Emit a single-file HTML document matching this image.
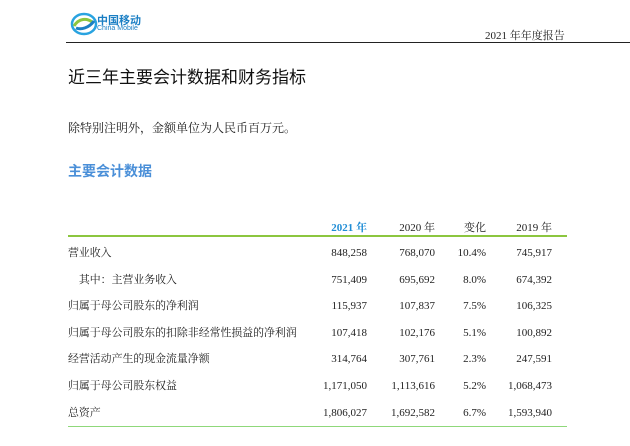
<!DOCTYPE html>
<html><head><meta charset="utf-8"><style>
body{margin:0;width:630px;height:446px;background:#fff;position:relative;overflow:hidden;font-family:"Liberation Serif","Noto Serif CJK SC",serif;color:#222}
.a{position:absolute;white-space:nowrap}
.r{position:absolute;white-space:nowrap;text-align:right;font-size:11px}
.l{position:absolute;white-space:nowrap;left:68px;font-size:10.9px}
</style></head><body>
<svg class="a" style="left:70px;top:12px" width="28" height="24" viewBox="0 0 28 24">
<ellipse cx="14" cy="12" rx="12" ry="10" fill="none" stroke="#29a3e0" stroke-width="2.5"/>
<path d="M4 14 C9 6,17 6,22 10" stroke="#8dc63f" stroke-width="3" fill="none"/>
<path d="M6 16 C11 18,19 16,24 9" stroke="#1b7fc4" stroke-width="3" fill="none"/>
</svg>
<div class="a" style="left:97px;top:12px;font:bold 11px 'Liberation Sans','Noto Sans CJK SC',sans-serif;color:#1b7fc4">中国移动</div>
<div class="a" style="left:97px;top:25px;font:7px 'Liberation Sans',sans-serif;color:#1b7fc4">China Mobile</div>
<div class="a" style="left:66px;top:42px;width:564px;height:1px;background:#222"></div>
<div class="a" style="left:485px;top:27px;font-size:11px">2021 年年度报告</div>
<div class="a" style="left:68px;top:63px;font:17px 'Liberation Sans','Noto Sans CJK SC',sans-serif;color:#111">近三年主要会计数据和财务指标</div>
<div class="a" style="left:68px;top:119px;font-size:12px">除特别注明外，金额单位为人民币百万元。</div>
<div class="a" style="left:68px;top:161px;font:bold 14px 'Liberation Sans','Noto Sans CJK SC',sans-serif;color:#4a8fd8">主要会计数据</div>
<div class="r" style="left:300px;width:67px;top:219px;color:#1f8dd6;font-weight:bold">2021 年</div>
<div class="r" style="left:370px;width:65px;top:219px">2020 年</div>
<div class="r" style="left:440px;width:46px;top:219px">变化</div>
<div class="r" style="left:490px;width:62px;top:219px">2019 年</div>
<div class="a" style="left:68px;top:235px;width:499px;height:2px;background:#8cc63f"></div>
<div class="a" style="left:68px;top:426px;width:499px;height:1px;background:#8fd87a"></div>
<div id="rows"></div>
<script>
var d=[["营业收入","848,258","768,070","10.4%","745,917"],["　其中：主营业务收入","751,409","695,692","8.0%","674,392"],["归属于母公司股东的净利润","115,937","107,837","7.5%","106,325"],["归属于母公司股东的扣除非经常性损益的净利润","107,418","102,176","5.1%","100,892"],["经营活动产生的现金流量净额","314,764","307,761","2.3%","247,591"],["归属于母公司股东权益","1,171,050","1,113,616","5.2%","1,068,473"],["总资产","1,806,027","1,692,582","6.7%","1,593,940"]];
var h="";d.forEach(function(r,i){var t=244+i*26.6;var n=t+3;
h+='<div class="l" style="top:'+t+'px">'+r[0]+'</div>';
h+='<div class="r" style="left:280px;width:87px;top:'+n+'px">'+r[1]+'</div>';
h+='<div class="r" style="left:350px;width:85px;top:'+n+'px">'+r[2]+'</div>';
h+='<div class="r" style="left:430px;width:56px;top:'+n+'px">'+r[3]+'</div>';
h+='<div class="r" style="left:470px;width:82px;top:'+n+'px">'+r[4]+'</div>';});
document.getElementById("rows").innerHTML=h;
</script>
</body></html>
